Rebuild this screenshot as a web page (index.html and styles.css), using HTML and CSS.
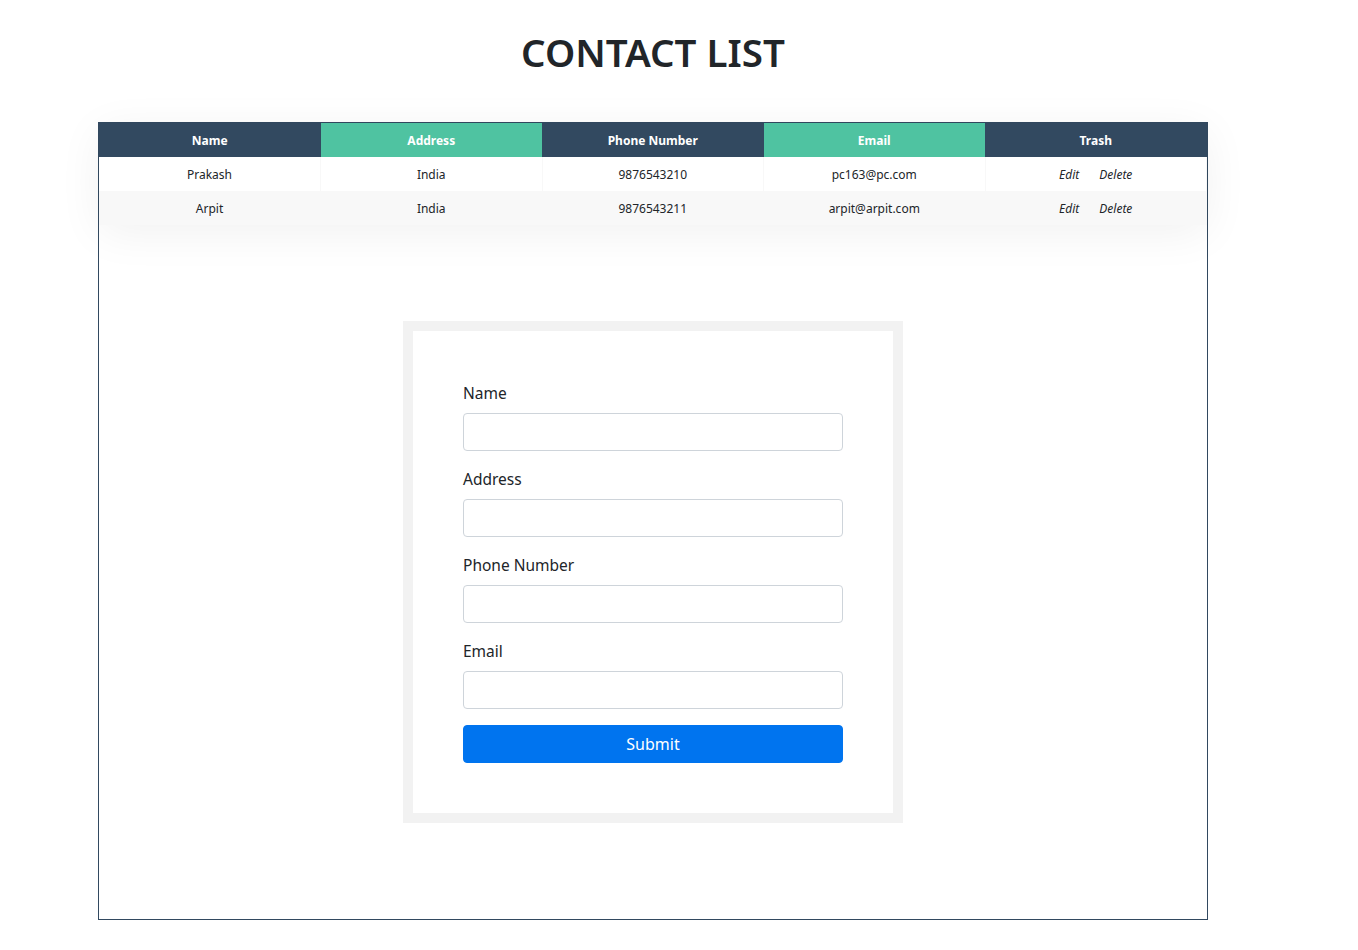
FILE: index.html
```html
<!DOCTYPE html>
<html lang="en">
<head>
<meta charset="utf-8">
<title>Contact List</title>
<link rel="stylesheet" href="styles.css">
</head>
<body>
<div class="page">
  <h1 class="title">CONTACT LIST</h1>
  <div class="container">
    <table class="fl-table">
      <thead>
        <tr>
          <th>Name</th>
          <th>Address</th>
          <th>Phone Number</th>
          <th>Email</th>
          <th>Trash</th>
        </tr>
      </thead>
      <tbody>
        <tr>
          <td>Prakash</td>
          <td>India</td>
          <td>9876543210</td>
          <td>pc163@pc.com</td>
          <td><span class="act">Edit</span><span class="act">Delete</span></td>
        </tr>
        <tr>
          <td>Arpit</td>
          <td>India</td>
          <td>9876543211</td>
          <td>arpit@arpit.com</td>
          <td><span class="act">Edit</span><span class="act">Delete</span></td>
        </tr>
      </tbody>
    </table>

    <div class="form-box">
      <form class="form">
        <div class="form-group">
          <label class="label">Name</label>
          <input class="input" type="text">
        </div>
        <div class="form-group">
          <label class="label">Address</label>
          <input class="input" type="text">
        </div>
        <div class="form-group">
          <label class="label">Phone Number</label>
          <input class="input" type="text">
        </div>
        <div class="form-group">
          <label class="label">Email</label>
          <input class="input" type="text">
        </div>
        <button class="btn" type="button">Submit</button>
      </form>
    </div>
  </div>
</div>
</body>
</html>
```

FILE: styles.css
```css
* { box-sizing: border-box; }
html, body { margin: 0; padding: 0; background: #ffffff; }
body {
  font-family: "Noto Sans", "Open Sans", sans-serif;
  color: #212529;
  font-size: 16px;
  line-height: 1.5;
}
.page {
  width: 1110px;
  margin-left: 98px;
  padding-top: 24px;
}
.title {
  margin: 0 0 42px;
  text-align: center;
  font-size: 38.5px;
  font-weight: 600;
  line-height: 56px;
  color: #212529;
}
.container {
  border: 1px solid #324960;
  height: 798px;
}
.fl-table {
  width: 100%;
  border-collapse: collapse;
  table-layout: fixed;
  font-size: 12px;
  white-space: nowrap;
  background: #fff;
  box-shadow: 0 8px 45px rgba(0, 0, 0, 0.06);
}
.fl-table th, .fl-table td {
  text-align: center;
  padding: 9px 8px 7px;
  line-height: 18px;
}
.fl-table thead th {
  color: #fff;
  font-weight: 700;
  background: #4fc3a1;
}
.fl-table thead th:nth-child(odd) { background: #324960; }
.fl-table td {
  border-right: 1px solid #f8f8f8;
  font-size: 12px;
  color: #212529;
}
.fl-table tbody tr:nth-child(even) { background: #f8f8f8; }
.act {
  font-style: italic;
  margin: 0 10px;
}
.form-box {
  width: 500px;
  margin: 96px auto;
  border: 10px solid #f2f2f2;
  background: #fff;
}
.form {
  padding: 50px;
}
.form-group { margin-bottom: 16px; }
.label {
  display: block;
  margin-bottom: 8px;
  font-size: 15.5px;
  line-height: 24px;
  color: #212529;
}
.input {
  display: block;
  width: 100%;
  height: 38px;
  border: 1px solid #ced4da;
  border-radius: 4px;
  background: #fff;
  padding: 6px 12px;
  font: inherit;
}
.btn {
  display: block;
  width: 100%;
  height: 38px;
  border: 1px solid #0074ef;
  border-radius: 4px;
  background: #0074ef;
  color: #fff;
  font: inherit;
  font-size: 16px;
  line-height: 24px;
  padding: 6px 12px;
}
```
